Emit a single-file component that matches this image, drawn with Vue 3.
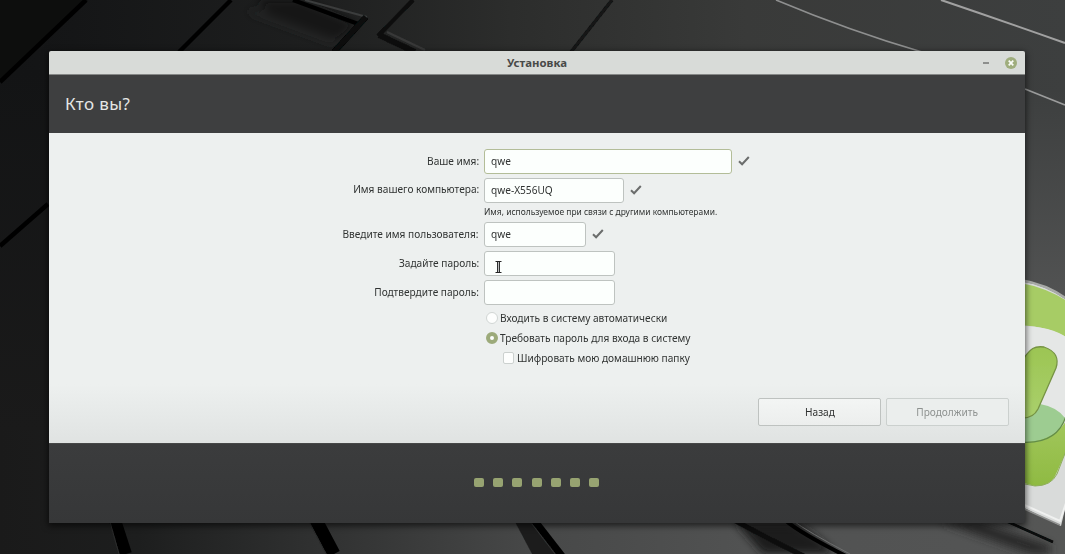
<script setup>
const fields = [
  { id: 'name', label: 'Ваше имя:', value: 'qwe', ok: true, active: true },
  { id: 'host', label: 'Имя вашего компьютера:', value: 'qwe-X556UQ', ok: true, hint: 'Имя, используемое при связи с другими компьютерами.' },
  { id: 'user', label: 'Введите имя пользователя:', value: 'qwe', ok: true },
  { id: 'pass', label: 'Задайте пароль:', value: '' },
  { id: 'confirm', label: 'Подтвердите пароль:', value: '' },
]
</script>

<template>
  <div class="desktop">
    <svg class="wallpaper" viewBox="0 0 1065 554" preserveAspectRatio="none">
      <defs>
        <linearGradient id="bg" x1="0" y1="0" x2="1" y2="0">
          <stop offset="0" stop-color="#131415" />
          <stop offset=".07" stop-color="#151617" />
          <stop offset=".3" stop-color="#1e1f1f" />
          <stop offset=".48" stop-color="#2c2d2c" />
          <stop offset=".7" stop-color="#393a39" />
          <stop offset="1" stop-color="#3d3f3f" />
        </linearGradient>
        <linearGradient id="low" x1="0" y1="0" x2="1" y2="0">
          <stop offset="0" stop-color="#1a1a1a" />
          <stop offset=".13" stop-color="#1d1e1e" />
          <stop offset=".3" stop-color="#303131" />
          <stop offset=".5" stop-color="#474848" />
          <stop offset=".7" stop-color="#515252" />
          <stop offset="1" stop-color="#545555" />
        </linearGradient>
        <linearGradient id="left" x1="0" y1="0" x2="0" y2="1">
          <stop offset="0" stop-color="#131415" />
          <stop offset="1" stop-color="#1a1a1a" />
        </linearGradient>
        <linearGradient id="side" x1="0" y1="0" x2="0" y2="1">
          <stop offset="0" stop-color="#3d3f3f" />
          <stop offset=".5" stop-color="#545555" />
          <stop offset="1" stop-color="#555655" />
        </linearGradient>
        <linearGradient id="leaf" x1="0" y1="0" x2="0" y2="1">
          <stop offset="0" stop-color="#a3c85e" />
          <stop offset="1" stop-color="#8fba42" />
        </linearGradient>
        <linearGradient id="stem" x1="0" y1="0" x2="0" y2="1">
          <stop offset="0" stop-color="#9cc553" />
          <stop offset="1" stop-color="#aad06c" />
        </linearGradient>
        <filter id="soft" x="-20%" y="-20%" width="140%" height="140%"><feGaussianBlur stdDeviation="4" /></filter>
        <filter id="fine" x="-5%" y="-5%" width="110%" height="110%"><feGaussianBlur stdDeviation=".7" /></filter>
      </defs>
      <rect width="1065" height="300" fill="url(#bg)" />
      <rect y="300" width="1065" height="254" fill="url(#low)" />
      <rect y="70" width="50" height="360" fill="url(#left)" />
      <path d="M0 82 88 0H0z" fill="#0d0e0d" />
      <rect x="1020" y="90" width="45" height="464" fill="url(#side)" />
      <g filter="url(#soft)">
        <path d="M258 0H300L356 24 338 40 268 14z" fill="#151617" />
        <path d="M250 11 334 42" stroke="#292a2a" stroke-width="3" />
        <path d="M735 522H795Q825 540 834 554H763z" fill="#1b1c1c" />
        <path d="M940 522H980L1050 545V554H1030z" fill="#292a2a" />
      </g>
      <g filter="url(#fine)" fill="none">
        <path d="M0 82 86 0" stroke="#030404" stroke-width="4.5" />
        <path d="M0 246 48 204" stroke="#050606" stroke-width="4.5" />
        <path d="M179 52 231 0" stroke="#040505" stroke-width="4.5" />
        <path d="M293 0 361 25" stroke="#050505" stroke-width="4" />
        <path d="M305 0 367 17" stroke="#3b3c3c" stroke-width="2" />
        <path d="M366 17 334 52" stroke="#070808" stroke-width="6" />
        <path d="M413 0 378 36" stroke="#0a0b0b" stroke-width="4" />
        <path d="M379 35 415 52" stroke="#101111" stroke-width="6" />
        <path d="M387 32 425 50" stroke="#383939" stroke-width="2" />
        <path d="M612 0 571 52" stroke="#121313" stroke-width="3.5" />
        <path d="M776 0Q850 31 922 52" stroke="#8e8f8f" stroke-width="1.6" />
        <path d="M941 0Q1000 20 1065 43" stroke="#a1a1a1" stroke-width="2" />
        <path d="M1025 89 1065 105" stroke="#9b9c9c" stroke-width="1.8" />
        <path d="M115 520 126 554" stroke="#020202" stroke-width="12" />
        <path d="M110 522 119 554" stroke="#2b2c2c" stroke-width="1" />
        <path d="M316 520 334 554" stroke="#020202" stroke-width="13" />
        <path d="M309 522 326 554" stroke="#292a2a" stroke-width="1" />
        <path d="M514 520 532 554H562L538 520z" fill="#1e1f1f" />
        <path d="M534 520 562 556" stroke="#030303" stroke-width="7" />
        <path d="M532 524 555 554" stroke="#313232" stroke-width="1" />
        <path d="M734 520Q780 545 804 556" stroke="#101111" stroke-width="5" />
        <path d="M785 520Q800 533 846 556" stroke="#050505" stroke-width="4" />
        <path d="M792 520Q808 532 850 554" stroke="#6e6f6f" stroke-width="1" />
        <path d="M1006 521 1053 542" stroke="#070808" stroke-width="2.5" />
      </g>
      <g filter="url(#fine)">
        <path d="M1020 281Q1046 285 1067 300V501L1061 526 1020 506z" fill="#d9dbda" />
        <path d="M1020 503 1060 521 1067 500" fill="none" stroke="#f0f1f0" stroke-width="2" />
        <path d="M1020 507 1060 525" stroke="#929392" fill="none" stroke-width="1.5" />
        <path d="M1020 280Q1046 284 1067 299" fill="none" stroke="#a8aaa7" stroke-width="2.5" />
        <path d="M1020 283Q1045 287 1069 302V339Q1051 327 1020 325z" fill="#a7cc65" />
        <path d="M1020 326Q1052 326 1069 339V420H1020z" fill="#e5e7e6" />
        <path d="M1020 440Q1058 442 1069 415V445L1056 474Q1051 486 1035 486L1020 482z" fill="url(#leaf)" />
        <path d="M1020 483 1035 486Q1051 486 1057 474L1069 443" fill="none" stroke="#8fae5c" stroke-width="1" />
        <path d="M1040 404Q1057 407 1065 418 1056 443 1020 442V418Q1035 419 1040 404z" fill="#9dcc91" />
        <path d="M1020 442Q1057 445 1066 416" fill="none" stroke="#638d4a" stroke-width="1.2" />
        <path d="M1020 365C1030 346 1036 346 1044 347 1056 351 1059 359 1056 368L1038 409Q1033 419 1020 418z" fill="url(#stem)" stroke="#769344" stroke-width="1.3" />
      </g>
    </svg>

    <section class="window">
      <header class="titlebar">
        <span class="title">Установка</span>
        <div class="controls">
          <i class="minimize"></i>
          <svg class="close" viewBox="0 0 12 12"><circle cx="6" cy="6" r="6" fill="#9fad7d" /><path d="m3.7 3.7 4.6 4.6m0-4.6L3.7 8.3" stroke="#fafcf7" stroke-width="1.7" /></svg>
        </div>
      </header>
      <div class="heading"><h1>Кто вы?</h1></div>
      <main class="content">
        <div class="form">
          <template v-for="f in fields" :key="f.id">
            <div class="row">
              <label :class="['label', 'label-' + f.id]"><span class="narrow">{{ f.label }}</span></label>
              <div :class="['input', f.id, { active: f.active }]">
                <span class="narrow">{{ f.value }}</span>
                <svg v-if="f.id === 'pass'" class="cursor" viewBox="0 0 7 14">
                  <path d="M1 1.5H3L3.5 2 4 1.5H6M1 12.5H3L3.5 12 4 12.5H6M3.5 2V12" fill="none" stroke="#fff" stroke-width="3" />
                  <path d="M.5 1.5H6.5M.5 12.5H6.5M2.6 2V12M4.4 2V12" fill="none" stroke="#252626" stroke-width="1.1" />
                </svg>
              </div>
              <svg v-if="f.ok" class="check" viewBox="0 0 12 10"><path d="M1 5.2 4.1 8.2 10.8 1" fill="none" stroke="#6b6d6c" stroke-width="2" /></svg>
            </div>
            <div v-if="f.hint" class="hint"><span class="narrow">{{ f.hint }}</span></div>
          </template>
        </div>
        <div class="options">
          <label class="option"><i class="radio"></i><span class="narrow">Входить в систему автоматически</span></label>
          <label class="option"><i class="radio selected"></i><span class="narrow">Требовать пароль для входа в систему</span></label>
          <label class="option nested"><i class="box"></i><span class="narrow">Шифровать мою домашнюю папку</span></label>
        </div>
        <div class="actions">
          <button class="button"><span class="narrow">Назад</span></button>
          <button class="button disabled"><span class="narrow">Продолжить</span></button>
        </div>
      </main>
      <footer class="footer"><i v-for="n in 7" :key="n" class="dot"></i></footer>
    </section>
  </div>
</template>

<style>
body { overflow: hidden; background: #1a1a1a; }
</style>

<style scoped>
* { box-sizing: border-box; }
.desktop { position: relative; width: 1065px; height: 554px; padding: 51px 40px 31px 49px; overflow: hidden; font: 11.5px/15px "Noto Sans", sans-serif; color: #303332; }
.wallpaper { position: absolute; inset: 0; width: 1065px; height: 554px; }
.narrow { display: inline-block; transform: scaleX(.88); transform-origin: left center; }
.window { position: relative; width: 976px; height: 472px; display: flex; flex-direction: column; border-radius: 2px 2px 0 0; box-shadow: 0 2px 6px 1px rgba(0,0,0,.6); }
.titlebar { height: 24px; display: grid; grid-template-columns: 1fr auto 1fr; align-items: center; background: #d8dbd8; border-bottom: 1px solid #858786; border-radius: 2px 2px 0 0; }
.title { grid-column: 2; font-size: 11.4px; font-weight: 700; color: #484a48; }
.controls { display: flex; justify-content: flex-end; align-items: center; gap: 16px; padding-right: 8px; }
.minimize { width: 6px; height: 2px; background: #8d8f8d; }
.close { width: 12px; height: 12px; }
.heading { height: 58px; background: #3e3f40; display: flex; align-items: center; padding-left: 16px; }
h1 { margin: 0; font: 400 17px/22px "Noto Sans", sans-serif; letter-spacing: .4px; color: #e5e6e5; }
.content { height: 310px; padding-top: 16px; background: linear-gradient(#edf0ef 0, #edf0ef 81%, #e0e3e2 100%); display: flex; flex-direction: column; }
.form { display: flex; flex-direction: column; }
.row { display: flex; align-items: center; height: 25px; margin-bottom: 4px; }
.label { width: 435px; padding: 0 5px 2px 0; text-align: right; white-space: nowrap; }
.label .narrow { transform-origin: right center; }
.label-host { padding-bottom: 4px; }
.input { height: 25px; width: 132px; border: 1px solid #bec3c0; border-radius: 3px; background: #fcfffd; padding: 3px 6px; white-space: nowrap; position: relative; }
.input.name { width: 248px; }
.input.host { width: 140px; }
.input.user { width: 102px; }
.input.pass, .input.confirm { width: 131px; }
.input.active { border-color: #b3bd98; }
.cursor { position: absolute; left: 10px; top: 8px; width: 7px; height: 14px; }
.check { width: 12px; height: 10px; margin: -1px 0 0 6px; }
.hint { height: 15px; margin-left: 435px; font-size: 9.3px; line-height: 9px; white-space: nowrap; }
.hint .narrow { transform: scaleX(.907); }
.options { margin: -1px 0 0 437px; }
.option { height: 20px; display: flex; align-items: center; gap: 2px; white-space: nowrap; }
.option .narrow { padding-bottom: 1px; }
.radio { width: 12px; height: 12px; border: 1px solid #d1d6d4; border-radius: 50%; background: #fdfefd; }
.radio.selected { border: 4px solid #9caa7a; }
.nested { padding-left: 17px; gap: 3px; }
.box { width: 11px; height: 12px; border: 1px solid #ccd1cf; border-radius: 2px; background: #fdfefd; }
.actions { margin: 30px 16px 0 auto; display: flex; gap: 5px; }
.button { width: 123px; height: 28px; padding: 0 0 1px; border: 1px solid #bec2c0; border-radius: 2px; background: linear-gradient(#f3f5f4, #eceeed); color: #303231; font: 11.5px/15px "Noto Sans", sans-serif; }
.button .narrow { transform-origin: center; }
.button.disabled { color: #8e9290; border-color: #cbd0ce; background: #ebeeed; }
.footer { height: 80px; display: flex; justify-content: center; align-items: center; gap: 9.2px; padding: 0 1px 2px 0; background: linear-gradient(#3b3c3d, #363738); border-top: 1px solid #474848; }
.dot { width: 10px; height: 9px; border-radius: 2px; background: #97a371; }
</style>
